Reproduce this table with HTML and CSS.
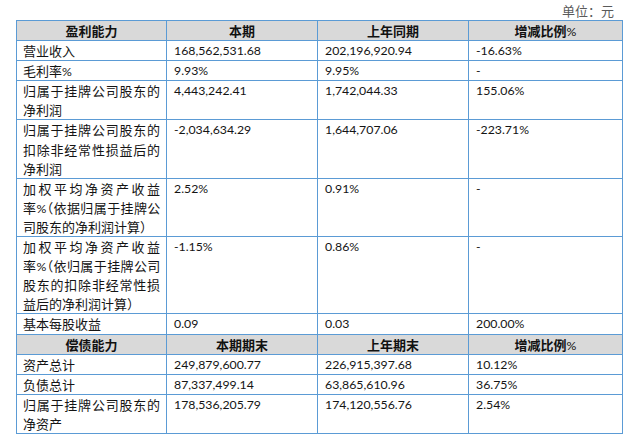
FILE: index.html
```html
<!DOCTYPE html>
<html lang="zh-CN">
<head>
<meta charset="utf-8">
<title>盈利能力</title>
<link rel="stylesheet" href="styles.css">
</head>
<body>
<div class="page">
  <div class="unit">单位：元</div>
  <table class="fin">
    <colgroup>
      <col class="c1"><col class="c2"><col class="c3"><col class="c4">
    </colgroup>
    <tr class="hd">
      <th>盈利能力</th><th>本期</th><th>上年同期</th><th>增减比例<span class="pct">%</span></th>
    </tr>
    <tr>
      <td class="lbl">营业收入</td><td class="n">168,562,531.68</td><td class="n">202,196,920.94</td><td class="n">-16.63%</td>
    </tr>
    <tr>
      <td class="lbl">毛利率<span class="pct">%</span></td><td class="n">9.93%</td><td class="n">9.95%</td><td class="n">-</td>
    </tr>
    <tr>
      <td class="lbl"><span class="j">归属于挂牌公司股东的</span><span class="ln">净利润</span></td><td class="n">4,443,242.41</td><td class="n">1,742,044.33</td><td class="n">155.06%</td>
    </tr>
    <tr>
      <td class="lbl"><span class="j">归属于挂牌公司股东的</span><span class="j">扣除非经常性损益后的</span><span class="ln">净利润</span></td><td class="n">-2,034,634.29</td><td class="n">1,644,707.06</td><td class="n">-223.71%</td>
    </tr>
    <tr>
      <td class="lbl"><span class="j">加权平均净资产收益</span><span class="j tight">率<span class="pct">%</span><span class="hw">（</span>依据归属于挂牌公</span><span class="ln">司股东的净利润计算）</span></td><td class="n">2.52%</td><td class="n">0.91%</td><td class="n">-</td>
    </tr>
    <tr>
      <td class="lbl"><span class="j">加权平均净资产收益</span><span class="j tight">率<span class="pct">%</span><span class="hw">（</span>依归属于挂牌公司</span><span class="j">股东的扣除非经常性损</span><span class="ln">益后的净利润计算）</span></td><td class="n">-1.15%</td><td class="n">0.86%</td><td class="n">-</td>
    </tr>
    <tr>
      <td class="lbl">基本每股收益</td><td class="n">0.09</td><td class="n">0.03</td><td class="n">200.00%</td>
    </tr>
    <tr class="hd">
      <th>偿债能力</th><th>本期期末</th><th>上年期末</th><th>增减比例<span class="pct">%</span></th>
    </tr>
    <tr>
      <td class="lbl">资产总计</td><td class="n">249,879,600.77</td><td class="n">226,915,397.68</td><td class="n">10.12%</td>
    </tr>
    <tr>
      <td class="lbl">负债总计</td><td class="n">87,337,499.14</td><td class="n">63,865,610.96</td><td class="n">36.75%</td>
    </tr>
    <tr>
      <td class="lbl"><span class="j">归属于挂牌公司股东的</span><span class="ln">净资产</span></td><td class="n">178,536,205.79</td><td class="n">174,120,556.76</td><td class="n">2.54%</td>
    </tr>
  </table>
</div>
</body>
</html>
```
FILE: styles.css
```css
html, body {
  margin: 0;
  padding: 0;
  background: #ffffff;
}
body {
  font-family: "Noto Sans CJK SC", "Noto Sans", sans-serif;
  color: #141414;
}
.page {
  padding: 2px 0 0 16px;
  width: 606px;
}
.unit {
  text-align: right;
  padding-right: 8px;
  font-size: 13px;
  line-height: 18px;
  height: 18px;
  color: #5a5a5a;
}
.fin {
  border-collapse: collapse;
  table-layout: fixed;
  width: 606px;
}
.c1 { width: 150px; }
.c2 { width: 151px; }
.c3 { width: 151px; }
.c4 { width: 154px; }
.fin td,
.fin th {
  border: 1px solid #5b9bd5;
  padding: 0 6px;
  height: 19px;
  line-height: 19.1px;
  font-size: 13px;
  vertical-align: top;
  text-align: left;
  font-weight: normal;
}
.fin th {
  background: #d9d9d9;
  text-align: center;
  font-weight: bold;
  color: #111111;
}
.fin td.n {
  font-family: "Lato", "Liberation Sans", sans-serif;
  font-size: 12.3px;
  padding-left: 7px;
}
.pct {
  font-family: "Lato", "Liberation Sans", sans-serif;
  font-weight: normal;
  font-size: 12.3px;
  line-height: 1;
}
.lbl .j {
  display: block;
  text-align: justify;
  text-align-last: justify;
}
.lbl .ln {
  display: block;
}
.tight {
  letter-spacing: -0.3px;
}
.hw {
  font-feature-settings: "halt" 1;
  line-height: 1;
}
```
